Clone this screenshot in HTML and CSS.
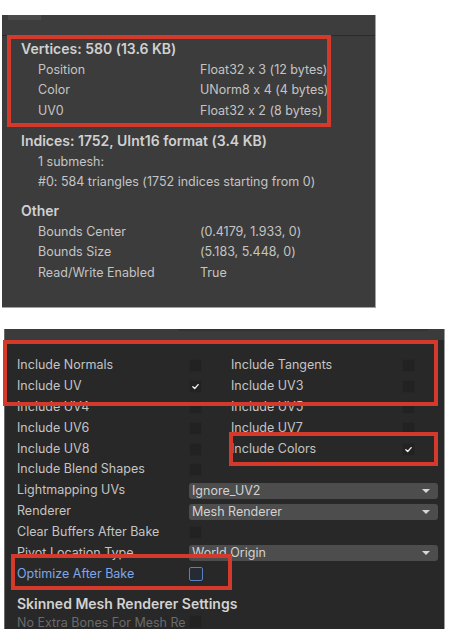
FILE: index.html
```html
<!DOCTYPE html>
<html>
<head>
<meta charset="utf-8">
<link rel="stylesheet" href="styles.css">
</head>
<body>
<section class="panel info">
  <div class="topbar"><div class="tab"></div></div>
  <div class="content">
    <div class="row head">Vertices: 580 (13.6 KB)</div>
    <div class="row kv"><span class="k">Position</span><span class="v">Float32 x 3 (12 bytes)</span></div>
    <div class="row kv"><span class="k">Color</span><span class="v">UNorm8 x 4 (4 bytes)</span></div>
    <div class="row kv"><span class="k">UV0</span><span class="v">Float32 x 2 (8 bytes)</span></div>
    <div class="row head gap">Indices: 1752, UInt16 format (3.4 KB)</div>
    <div class="row sub">1 submesh:</div>
    <div class="row sub">#0: 584 triangles (1752 indices starting from 0)</div>
    <div class="row head gap2">Other</div>
    <div class="row kv"><span class="k">Bounds Center</span><span class="v">(0.4179, 1.933, 0)</span></div>
    <div class="row kv"><span class="k">Bounds Size</span><span class="v">(5.183, 5.448, 0)</span></div>
    <div class="row kv"><span class="k">Read/Write Enabled</span><span class="v">True</span></div>
  </div>
  <div class="mark m1"></div>
</section>

<section class="panel settings">
  <div class="strip"><div class="striptab"></div></div>
  <div class="content2">
    <div class="grid4">
      <span class="lbl">Include Normals</span><span class="cb"></span><span class="lbl">Include Tangents</span><span class="cb"></span>
      <span class="lbl">Include UV</span><span class="cb on"><svg viewBox="0 0 14 14"><path d="M3.6 7.3 L6 9.6 L10.4 4.6"/></svg></span><span class="lbl">Include UV3</span><span class="cb"></span>
      <span class="lbl">Include UV4</span><span class="cb"></span><span class="lbl">Include UV5</span><span class="cb"></span>
      <span class="lbl">Include UV6</span><span class="cb"></span><span class="lbl">Include UV7</span><span class="cb"></span>
      <span class="lbl">Include UV8</span><span class="cb"></span><span class="lbl">Include Colors</span><span class="cb on"><svg viewBox="0 0 14 14"><path d="M3.6 7.3 L6 9.6 L10.4 4.6"/></svg></span>
      <span class="lbl">Include Blend Shapes</span><span class="cb"></span><span></span><span></span>
    </div>
    <div class="frow"><span class="lbl">Lightmapping UVs</span><div class="dd"><span>Ignore_UV2</span><i class="arrow"></i></div></div>
    <div class="frow"><span class="lbl">Renderer</span><div class="dd"><span>Mesh Renderer</span><i class="arrow"></i></div></div>
    <div class="frow"><span class="lbl">Clear Buffers After Bake</span><span class="cb"></span></div>
    <div class="frow"><span class="lbl">Pivot Location Type</span><div class="dd"><span>World Origin</span><i class="arrow"></i></div></div>
    <div class="frow focus"><span class="lbl">Optimize After Bake</span><span class="cb"></span></div>
    <div class="frow sect"><span class="shead">Skinned Mesh Renderer Settings</span></div>
    <div class="frow dim"><span class="lbl">No Extra Bones For Mesh Re</span><span class="cb"></span></div>
  </div>
  <div class="mark m2"></div>
  <div class="mark m3"></div>
  <div class="mark m4"></div>
</section>
</body>
</html>
```
FILE: styles.css
```css
html, body {
  margin: 0;
  padding: 0;
  background: #ffffff;
}
body {
  font-family: Inter, "Noto Sans", sans-serif;
  font-size: 12.5px;
  color: #c4c4c4;
  font-feature-settings: "calt" 0;
}
.panel {
  position: relative;
  box-sizing: border-box;
}
.info {
  margin: 15px 0 0 2px;
  width: 374px;
  height: 293px;
  background: #3c3c3c;
  border-right: 1px solid #a2a2a2;
  border-bottom: 1px solid #a2a2a2;
}
.topbar {
  height: 20px;
  border-bottom: 1px solid #2a2a2a;
  background: #3d3d3d;
  position: relative;
}
.tab {
  margin-left: 6px;
  width: 33px;
  height: 5px;
  background: #4a4a4a;
}
.content {
  padding: 3px 0 0 19px;
}
.row {
  height: 20.7px;
  line-height: 20.7px;
  white-space: nowrap;
}
.head {
  font-weight: 600;
  color: #d0d0d0;
  font-size: 14px;
}
.gap { margin-top: 9.3px; }
.gap2 { margin-top: 7.9px; }
.kv {
  display: grid;
  grid-template-columns: 162px 1fr;
  padding-left: 17px;
}
.sub { padding-left: 17px; }
.mark {
  position: absolute;
  box-sizing: border-box;
  border: 4px solid #d33a2c;
}
.m1 { left: 5px; top: 20px; width: 324px; height: 92px; }

.settings {
  margin: 21px 0 0 4px;
  width: 441px;
  height: 300px;
  background: #282828;
  border-right: 1px solid #9a9a9a;
  border-left: 1px solid #6a6a6a;
}
.strip {
  height: 11px;
  background: #3b3b3b;
  position: relative;
}
.striptab {
  margin-left: 173px;
  width: 250px;
  height: 2px;
  background: #333333;
}
.content2 {
  padding: 15px 0 0 12px;
}
.grid4 {
  display: grid;
  grid-template-columns: 172px 42px 171px 14px;
  grid-auto-rows: 20.9px;
  align-items: center;
}
.lbl {
  line-height: 20.9px;
  white-space: nowrap;
}
.cb {
  width: 13px;
  height: 13px;
  box-sizing: border-box;
  background: #222222;
  border: 1px solid #262626;
  border-radius: 2px;
  display: flex;
  align-items: center;
  justify-content: center;
}
.cb svg {
  width: 13px;
  height: 13px;
  fill: none;
  stroke: #f0f0f0;
  stroke-width: 1.7;
  stroke-linecap: round;
  stroke-linejoin: round;
}
.frow {
  display: grid;
  grid-template-columns: 172px 249px;
  height: 20.9px;
  align-items: center;
}
.frow .cb { justify-self: start; }
.dd {
  height: 16px;
  background: #4d4d4d;
  border-radius: 3px;
  display: flex;
  align-items: center;
  justify-content: space-between;
  padding: 0 8px 0 3px;
  color: #d2d2d2;
  line-height: 16px;
}
.arrow {
  width: 0;
  height: 0;
  border-left: 4px solid transparent;
  border-right: 4px solid transparent;
  border-top: 4px solid #d8d8d8;
}
.focus .lbl { color: #7ea6e8; }
.focus .cb {
  border: 1.5px solid #5a7fc2;
  background: #252a33;
  width: 14px;
  height: 14px;
}
.sect {
  margin-top: 7.8px;
}
.shead {
  font-weight: 600;
  font-size: 14px;
  color: #d2d2d2;
  white-space: nowrap;
}
.dim {
  height: 15px;
  align-items: start;
}
.dim .lbl {
  color: #6a6a6a;
  line-height: 15px;
  padding-top: 1.5px;
}
.dim .cb { margin-top: 2px; }
.m2 { left: -2px; top: 11px; width: 435px; height: 66px; }
.m3 { left: 224px; top: 103px; width: 209px; height: 34px; }
.m4 { left: 6px; top: 225px; width: 221px; height: 36px; }
```
